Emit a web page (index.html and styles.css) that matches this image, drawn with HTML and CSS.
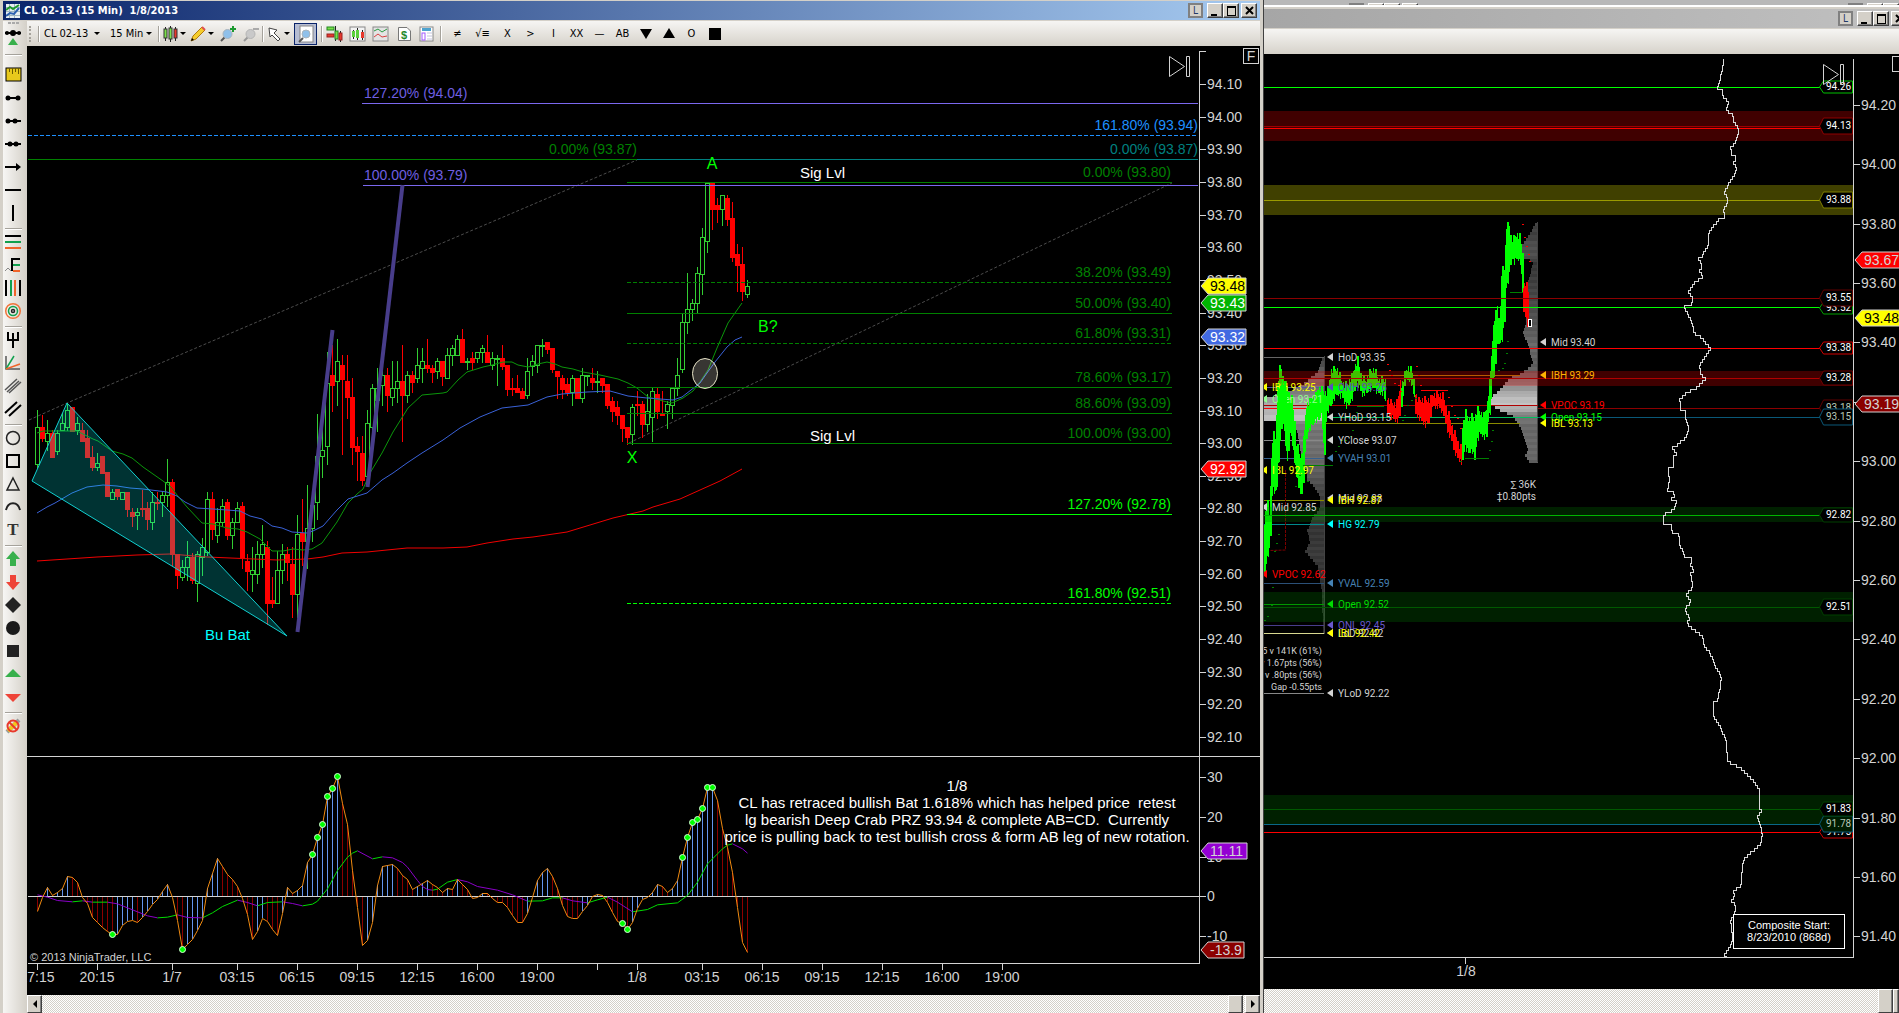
FILE: index.html
```html
<!DOCTYPE html>
<html lang="en">
<head>
<meta charset="utf-8">
<title>CL 02-13 (15 Min) 1/8/2013</title>
<link rel="stylesheet" href="styles.css">
</head>
<body>
<main class="desktop">
  <section class="window window-main">
    <header class="titlebar">
      <svg class="app-icon" viewBox="0 0 14 14"><rect width="14" height="14" fill="#e8eef2"/><path d="M0 3.500H14M0 7.500H14M0 11.500H14M3.500 0V14M8.500 0V14" stroke="#9fb4c0"/><path d="M0 6L4 3L7 5L13 1" stroke="#1f9a2e" stroke-width="2" fill="none"/><path d="M0 12L4 9L8 10L13 4" stroke="#2b5fb0" stroke-width="2" fill="none"/></svg>
      <h1 class="title">CL 02-13 (15 Min)&nbsp; 1/8/2013</h1>
      <div class="controls">
        <button class="ctl ctl-link" aria-label="Link">L</button>
        <button class="ctl" aria-label="Minimize"><svg viewBox="0 0 13 12"><path d="M2 9H8V11H2Z"/></svg></button>
        <button class="ctl" aria-label="Maximize"><svg viewBox="0 0 13 12"><path d="M2 1H11V11H2ZM3 3V10H10V3Z" fill-rule="evenodd"/></svg></button>
        <button class="ctl ctl-close" aria-label="Close"><svg viewBox="0 0 13 12"><path d="M3 2L10 9M10 2L3 9" stroke="#000" stroke-width="2"/></svg></button>
      </div>
    </header>
    <div class="window-body">
      <nav class="side-tools" aria-label="Drawing tools">
        <button class="tool tool-first" aria-label="Show tools"><svg viewBox="0 0 18 24"><path d="M4 1H7M8 1H11M12 1H15" stroke="#aaa" stroke-width="2"/><path d="M1 11H17" stroke="#000" stroke-width="2"/><circle cx="3" cy="11" r="2"/><circle cx="9" cy="11" r="3"/><circle cx="15" cy="11" r="2"/><path d="M4 23L9 16L14 23Z" fill="#38b04c"/></svg></button>
        <hr class="rule rule-wide">
        <button class="tool" aria-label="Ruler"><svg viewBox="0 0 18 18"><rect x="2" y="2" width="15" height="13" fill="#e8c91c" stroke="#000"/><path d="M5.500 2V6M8.500 2V8M11.500 2V6M14.500 2V8" stroke="#6b5a00"/></svg></button>
        <button class="tool" aria-label="Line"><svg viewBox="0 0 18 18"><path d="M3 9H15" stroke="#000" stroke-width="2"/><circle cx="4" cy="9" r="2.500"/><circle cx="14" cy="9" r="2.500"/></svg></button>
        <button class="tool" aria-label="Ray"><svg viewBox="0 0 18 18"><path d="M3 9H17" stroke="#000" stroke-width="2"/><circle cx="4" cy="9" r="2.500"/><circle cx="11" cy="9" r="2.500"/></svg></button>
        <button class="tool" aria-label="Extended line"><svg viewBox="0 0 18 18"><path d="M1 9H17" stroke="#000" stroke-width="2"/><circle cx="6" cy="9" r="2.500"/><circle cx="12" cy="9" r="2.500"/></svg></button>
        <button class="tool" aria-label="Arrow line"><svg viewBox="0 0 18 18"><path d="M1 9H15" stroke="#000" stroke-width="2"/><path d="M12 5L17 9L12 13Z"/></svg></button>
        <button class="tool" aria-label="Horizontal line"><svg viewBox="0 0 18 18"><path d="M1 9H17" stroke="#000" stroke-width="2"/></svg></button>
        <button class="tool" aria-label="Vertical line"><svg viewBox="0 0 18 18"><path d="M9 1V17" stroke="#000" stroke-width="2"/></svg></button>
        <hr class="rule">
        <button class="tool" aria-label="Fibonacci retracement"><svg viewBox="0 0 18 18"><path d="M1 3H17" stroke="#000" stroke-width="2"/><path d="M1 9H17" stroke="#12a04e" stroke-width="2"/><path d="M1 15H17" stroke="#f0642a" stroke-width="2"/></svg></button>
        <button class="tool" aria-label="Fibonacci extension"><svg viewBox="0 0 18 18"><path d="M16 3H8V15" stroke="#000" stroke-width="2" fill="none"/><path d="M9 9H16" stroke="#12a04e" stroke-width="2"/><path d="M9 15H16" stroke="#f0642a" stroke-width="2"/><path d="M1 15L4 12L7 15" stroke="#888" fill="none"/></svg></button>
        <button class="tool" aria-label="Fibonacci time"><svg viewBox="0 0 18 18"><path d="M2 1V17M16 1V17" stroke="#000" stroke-width="2"/><path d="M7 1V17" stroke="#12a04e" stroke-width="2"/><path d="M11 1V17" stroke="#f0642a" stroke-width="2"/></svg></button>
        <button class="tool" aria-label="Fibonacci circle"><svg viewBox="0 0 18 18" fill="none" stroke-width="1.500"><circle cx="9" cy="9" r="7.300" stroke="#f0743a"/><circle cx="9" cy="9" r="4.500" stroke="#12a04e"/><circle cx="9" cy="9" r="1.500" stroke="#222"/></svg></button>
        <hr class="rule">
        <button class="tool" aria-label="Andrews pitchfork"><svg viewBox="0 0 18 18"><path d="M4 1V9H14V1M9 2V17" stroke="#000" stroke-width="2" fill="none"/></svg></button>
        <button class="tool" aria-label="Gann fan"><svg viewBox="0 0 18 18"><path d="M2 2V15H16" stroke="#555" stroke-width="1.500" fill="none"/><path d="M2 15L10 2" stroke="#12a04e" stroke-width="1.500"/><path d="M2 15L16 10" stroke="#f0642a" stroke-width="1.500"/></svg></button>
        <button class="tool" aria-label="Regression channel"><svg viewBox="0 0 18 18"><path d="M1 13L13 2M3 15L15 4M5 16L17 5" stroke="#555" stroke-width="1.500"/></svg></button>
        <button class="tool" aria-label="Trend channel"><svg viewBox="0 0 18 18"><path d="M1 13L13 2M5 16L17 5" stroke="#000" stroke-width="2"/></svg></button>
        <hr class="rule">
        <button class="tool" aria-label="Ellipse"><svg viewBox="0 0 18 18"><circle cx="9" cy="9" r="6.500" fill="none" stroke="#222" stroke-width="1.500"/></svg></button>
        <button class="tool" aria-label="Rectangle"><svg viewBox="0 0 18 18"><rect x="3" y="3" width="12" height="12" fill="none" stroke="#000" stroke-width="2"/></svg></button>
        <button class="tool" aria-label="Triangle"><svg viewBox="0 0 18 18"><path d="M9 3L15 15H3Z" fill="none" stroke="#222" stroke-width="1.500"/></svg></button>
        <button class="tool" aria-label="Arc"><svg viewBox="0 0 18 18"><path d="M2 12C4 3 14 3 16 12" fill="none" stroke="#222" stroke-width="2"/></svg></button>
        <button class="tool tool-text" aria-label="Text">T</button>
        <hr class="rule">
        <button class="tool" aria-label="Arrow up"><svg viewBox="0 0 18 18"><path d="M9 1L16 9H12V16H6V9H2Z" fill="#38b04c"/></svg></button>
        <button class="tool" aria-label="Arrow down"><svg viewBox="0 0 18 18"><path d="M9 17L16 9H12V2H6V9H2Z" fill="#ee4438"/></svg></button>
        <button class="tool" aria-label="Diamond"><svg viewBox="0 0 18 18"><path d="M9 1L17 9L9 17L1 9Z" fill="#222"/></svg></button>
        <button class="tool" aria-label="Dot"><svg viewBox="0 0 18 18"><circle cx="9" cy="9" r="7" fill="#1a1a1a"/></svg></button>
        <button class="tool" aria-label="Square"><svg viewBox="0 0 18 18"><rect x="3" y="3" width="12" height="12" fill="#222"/></svg></button>
        <button class="tool" aria-label="Triangle up"><svg viewBox="0 0 18 18"><path d="M9 4L17 12H1Z" fill="#38b04c"/></svg></button>
        <button class="tool" aria-label="Triangle down"><svg viewBox="0 0 18 18"><path d="M9 14L17 6H1Z" fill="#ee4438"/></svg></button>
        <hr class="rule">
        <button class="tool" aria-label="Remove drawings"><svg viewBox="0 0 18 18"><path d="M3 15L15 3" stroke="#999" stroke-width="4"/><path d="M4 14L13 5" stroke="#f2c51d" stroke-width="4"/><circle cx="9" cy="9" r="5.500" fill="none" stroke="#e8392c" stroke-width="2"/><path d="M5 5L13 13" stroke="#e8392c" stroke-width="2"/></svg></button>
      </nav>
      <div class="chart-column">
        <div class="toolbar">
          <span class="grip"></span><span class="vr"></span>
          <label class="picker"><select class="pick pick-instrument" aria-label="Instrument"><option>CL 02-13</option></select></label>
          <label class="picker"><select class="pick pick-interval" aria-label="Interval"><option>15 Min</option></select></label>
          <span class="vr"></span>
          <button class="tb tb-drop" aria-label="Chart style"><svg viewBox="0 0 16 18"><path d="M3.500 2V16M8.500 1V17M13.500 2V16" stroke="#222"/><rect x="2" y="4" width="3" height="9" fill="#7be04a" stroke="#333"/><rect x="7" y="3" width="3" height="11" fill="#7be04a" stroke="#333"/><rect x="12" y="4" width="3" height="9" fill="#e8392c" stroke="#333"/></svg></button>
          <button class="tb tb-drop" aria-label="Draw"><svg viewBox="0 0 16 18"><path d="M1 16L3 11L12 2L15 5L6 14Z" fill="#f5cd2c" stroke="#b07a10"/><path d="M1 16L2 13L4 15Z"/><path d="M12 2L15 5" stroke="#e05050" stroke-width="2"/></svg></button>
          <button class="tb" aria-label="Zoom in"><svg viewBox="0 0 18 18"><path d="M2 16L6 12" stroke="#555" stroke-width="2"/><circle cx="8.500" cy="9" r="4.500" fill="#8fc0ea" stroke="#a9b4bd"/><path d="M14 1V7M11 4H17" stroke="#1c9a30" stroke-width="2"/></svg></button>
          <button class="tb" aria-label="Zoom out"><svg viewBox="0 0 18 18"><path d="M2 16L6 12" stroke="#999" stroke-width="2"/><circle cx="8.500" cy="9" r="4.500" fill="#c9c9c9" stroke="#b5b5b5"/><path d="M11 4H17" stroke="#aaa" stroke-width="2"/></svg></button>
          <span class="vr"></span>
          <button class="tb tb-drop" aria-label="Pointer"><svg viewBox="0 0 16 18"><path d="M3 3L11 5L8 8L14 14L12 16L6 10L4 12Z" fill="#fff" stroke="#444"/></svg></button>
          <button class="tb tb-active" aria-label="Magnifier"><svg viewBox="0 0 18 18"><rect x="3" y="1" width="13" height="16" fill="#fff" stroke="#888"/><path d="M2 17L6 13" stroke="#555" stroke-width="2"/><circle cx="9" cy="9" r="4" fill="#8fc0ea" stroke="#a9b4bd"/></svg></button>
          <span class="vr"></span>
          <button class="tb" aria-label="Data series"><svg viewBox="0 0 18 18"><path d="M9.500 1V16M14.500 6V17" stroke="#222"/><rect x="1" y="2" width="7" height="3" fill="#7be04a" stroke="#282"/><rect x="1" y="9" width="7" height="3" fill="#e8392c" stroke="#922"/><rect x="9" y="6" width="3" height="8" fill="#7be04a" stroke="#282"/><rect x="13" y="8" width="3" height="7" fill="#e8392c" stroke="#922"/></svg></button>
          <button class="tb" aria-label="Candles"><svg viewBox="0 0 18 18"><rect x="1" y="2" width="15" height="14" fill="#f4f4f4" stroke="#888"/><path d="M4.500 5V14M8.500 3V15M13.500 5V15" stroke="#222"/><rect x="3" y="6" width="3" height="6" fill="#5bd03a"/><rect x="7" y="5" width="3" height="8" fill="#5bd03a"/><rect x="12" y="7" width="3" height="6" fill="#e8392c"/></svg></button>
          <button class="tb" aria-label="Indicators"><svg viewBox="0 0 18 18"><rect x="1" y="2" width="15" height="14" fill="#e4e4e4" stroke="#888"/><path d="M2 6L6 4L10 7L15 4" stroke="#2a9a40" fill="none"/><path d="M2 12L6 9L10 12L15 11" stroke="#d94040" fill="none"/></svg></button>
          <button class="tb" aria-label="Strategies"><svg viewBox="0 0 18 18"><path d="M3.500 2.500H12L15.500 6V15.500H3.500Z" fill="#fff" stroke="#777"/><text class="dollar" x="9" y="14" text-anchor="middle">$</text></svg></button>
          <button class="tb" aria-label="Properties"><svg viewBox="0 0 18 18"><rect x="2" y="2" width="13" height="14" fill="#fff" stroke="#888"/><rect x="4" y="3" width="9" height="3" fill="#4ea3cf"/><rect x="4" y="8" width="3" height="7" fill="#fff" stroke="#a259ff"/><path d="M9 8H14M9 11H14M9 14H14" stroke="#c4c4dd"/></svg></button>
          <span class="vr vr-spaced"></span>
          <button class="tx">≠</button><button class="tx tx-wide">√≡</button><button class="tx">X</button><button class="tx">&gt;</button><button class="tx">I</button><button class="tx">XX</button><button class="tx">—</button><button class="tx">AB</button><button class="tx" aria-label="Marker down"><svg viewBox="0 0 12 12"><path d="M0 1H12L6 11Z"/></svg></button><button class="tx" aria-label="Marker up"><svg viewBox="0 0 12 12"><path d="M0 10H12L6 0Z"/></svg></button><button class="tx">O</button><button class="tx" aria-label="Marker square"><svg viewBox="0 0 12 12"><path d="M0 0H12V12H0Z"/></svg></button>
        </div>
        <svg class="chart" id="price-chart" viewBox="27 46 1233 949" preserveAspectRatio="xMinYMin slice" role="img" aria-label="Crude oil 15 minute chart"></svg>
        <div class="scrollbar"><button class="sb" aria-label="Scroll left"><svg viewBox="0 0 12 12"><path d="M8 2V10L4 6Z"/></svg></button><span class="track"></span><button class="sb" aria-label="Scroll thumb"></button><button class="sb sb-end" aria-label="Scroll right"><svg viewBox="0 0 12 12"><path d="M4 2V10L8 6Z"/></svg></button></div>
      </div>
    </div>
  </section>
  <section class="window window-profile">
    <div class="behind">
      <div class="controls"><span class="ctl ctl-link"></span><span class="ctl"></span><span class="ctl"></span><span class="ctl ctl-close"></span></div>
      <div class="controls"><span class="ctl ctl-link"></span><span class="ctl"></span><span class="ctl"></span></div>
    </div>
    <header class="titlebar titlebar-idle">
      <div class="controls">
        <button class="ctl ctl-link" aria-label="Link">L</button>
        <button class="ctl" aria-label="Minimize"><svg viewBox="0 0 13 12"><path d="M2 9H8V11H2Z"/></svg></button>
        <button class="ctl" aria-label="Maximize"><svg viewBox="0 0 13 12"><path d="M2 1H11V11H2ZM3 3V10H10V3Z" fill-rule="evenodd"/></svg></button>
        <button class="ctl ctl-close" aria-label="Close"><svg viewBox="0 0 13 12"><path d="M3 2L10 9M10 2L3 9" stroke="#000" stroke-width="2"/></svg></button>
      </div>
    </header>
    <div class="toolbar"></div>
    <svg class="chart" id="profile-chart" viewBox="1264 54 635 935" preserveAspectRatio="xMinYMin slice" role="img" aria-label="Volume profile chart"></svg>
    <div class="scrollbar scrollbar-tall"><span class="track"></span><button class="sb" aria-label="Scroll thumb"></button><span class="sb sb-cut"></span></div>
  </section>
</main>
<script src="chart.js"></script>
</body>
</html>
```
FILE: styles.css
```css
* { box-sizing: border-box; }
body { margin: 0; background: #000; font: 11px "DejaVu Sans Condensed", "DejaVu Sans", sans-serif; color: #000; }
button { margin: 0; padding: 0; border: 0; background: none; color: inherit; font: inherit; }
svg { display: block; }
.desktop { display: grid; grid-template-columns: 1264fr 635fr; height: 100vh; min-height: 640px; overflow: hidden; }
.window { display: flex; flex-direction: column; min-width: 0; min-height: 0; background: #d4d0c8; overflow: hidden; }
.window-main { padding: 1px 3px 0; border-right: 1px solid #404040; }
.titlebar { display: flex; align-items: center; gap: 4px; flex: none; height: 19px; padding: 0 3px; background: linear-gradient(90deg, #0a246a, #a6caf0); }
.titlebar-idle { height: 19px; padding: 0; justify-content: flex-end; background: linear-gradient(90deg, #a6a6a6, #c0c0c0); }
.app-icon { width: 14px; height: 14px; }
.title { margin: 0; flex: 1; font-size: 11px; font-weight: bold; line-height: 19px; color: #fff; white-space: nowrap; }
.controls { display: flex; align-items: center; }
.titlebar-idle .controls { margin-right: -8px; }
.ctl { display: grid; place-items: center; width: 16px; height: 15px; flex: none; background: #d4d0c8; border: 1px solid; border-color: #fff #404040 #404040 #fff; box-shadow: inset -1px -1px 0 #808080; }
.ctl svg { width: 13px; height: 12px; }
.ctl-link { width: 15px; margin-right: 4px; border: 2px solid #808080; box-shadow: none; color: #223a66; font-size: 10px; line-height: 10px; }
.ctl-close { margin-left: 2px; }
.window-body { display: flex; flex: 1; min-height: 0; margin-top: 1px; }
.side-tools { display: flex; flex-direction: column; flex: none; width: 24px; padding-right: 4px; align-items: center; background: linear-gradient(90deg, #f7f6f4, #d4d0c8); }
.tool { display: grid; place-items: center; flex: none; width: 18px; height: 23px; }
.tool svg { width: 18px; height: 18px; }
.tool-first { height: 25px; }
.tool-first svg { height: 24px; }
.tool-text { font: bold 17px "Liberation Serif", serif; color: #333; }
.rule { flex: none; width: 17px; height: 2px; margin: 4px 0 0; border: 0; background: #a5a29b; border-bottom: 1px solid #fff; }
.rule-wide { margin: 8px 0 7px; }
.chart-column { display: flex; flex-direction: column; flex: 1; min-width: 0; }
.toolbar { display: flex; align-items: center; flex: none; height: 25px; background: linear-gradient(#f6f5f3, #d6d2ca); white-space: nowrap; overflow: hidden; }
.window-profile .toolbar { margin-top: 1px; }
.grip { width: 3px; height: 16px; margin: 0 6px 0 2px; border-left: 2px dotted #a5a29b; }
.vr { flex: none; width: 2px; height: 16px; background: #a5a29b; border-right: 1px solid #fff; }
.vr-spaced { margin: 0 4px 0 2px; }
.picker { display: flex; align-items: center; padding: 0 10px 0 4px; }
.picker::after, .tb-drop::after { content: ""; border: 3px solid transparent; border-top-color: #000; border-bottom: 0; }
.pick { appearance: none; border: 0; padding: 0; background: none; font: 11px "DejaVu Sans Condensed", "DejaVu Sans", sans-serif; color: #000; }
.pick-instrument { width: 50px; }
.pick-interval { width: 36px; }
.picker + .picker { padding: 0 6px 0 0; }
.tb { display: flex; align-items: center; justify-content: center; gap: 2px; flex: none; width: 23px; height: 22px; }
.tb svg { width: 18px; height: 18px; }
.tb-drop { width: 28px; }
.tb-drop svg { width: 16px; }
.tb-active { margin: 0 4px 0 2px; border: 1px solid #0a246a; background: #b6bdd2; }
.dollar { font: bold 11px "Liberation Sans", Arial, sans-serif; fill: #1f8a2a; }
.tx { display: grid; place-items: center; flex: none; width: 23px; height: 22px; }
.tx-wide { width: 27px; }
.tx svg { width: 12px; height: 12px; }
.chart { flex: 1; width: 100%; min-height: 0; background: #000; font-family: "Liberation Sans", Arial, sans-serif; }
.chart text { white-space: pre; }
.scrollbar { display: flex; flex: none; height: 18px; background: repeating-conic-gradient(#fff 0 25%, #d4d0c8 0 50%) 0 0 / 2px 2px; }
.scrollbar-tall { height: 24px; }
.track { flex: 1; }
.sb { display: grid; place-items: center; flex: none; width: 15px; height: 100%; background: #d4d0c8; border: 1px solid; border-color: #fff #404040 #404040 #fff; box-shadow: inset -1px 0 0 #808080; }
.sb svg { width: 12px; height: 12px; }
.sb-end { margin-left: 2px; }
.sb-cut { width: 6px; }
.behind { display: flex; justify-content: space-between; align-items: flex-start; flex: none; height: 9px; padding: 3px 0 0 85px; background: linear-gradient(#b8b8b8 5px, #fff 5px, #fff 7px, #d4d0c8 7px); overflow: hidden; }
.behind .controls { height: 2px; overflow: hidden; align-items: flex-start; }
.behind .ctl { height: 12px; }

.price { font-size: 14px; fill: #d3d3d3; }
.note { font-size: 15px; fill: #fff; }
.mark { font-size: 16px; fill: #0f0; }
.fine { font-size: 11px; fill: #d3d3d3; }
.tag { font-size: 11px; fill: #fff; }
.level { font: 10px Roboto, sans-serif; }
.stat { font: 9px Roboto, sans-serif; fill: #d3d3d3; }
.crisp { shape-rendering: crispEdges; }
```
FILE: chart.js
```js
const NS = 'http://www.w3.org/2000/svg';
let host;
function el(name, attrs, text) {
  const n = document.createElementNS(NS, name);
  for (const k in attrs) n.setAttribute(k, attrs[k]);
  if (text !== undefined) n.textContent = text;
  host.appendChild(n);
  return n;
}
const line = (x1, y1, x2, y2, c, dash, w) =>
  el('line', { x1, y1, x2, y2, stroke: c, 'stroke-width': w || 1, class: 'crisp', ...(dash ? { 'stroke-dasharray': dash } : {}) });
const rect = (x, y, width, height, fill, more) => el('rect', { x, y, width, height, fill, class: 'crisp', ...more });
const text = (x, y, s, cls, fill, anchor) =>
  el('text', { x, y, class: cls, ...(fill ? { style: 'fill:' + fill } : {}), 'text-anchor': anchor || 'start' }, s);
const poly = (pts, c, w) => el('polyline', { points: pts, fill: 'none', stroke: c, 'stroke-width': w || 1 });
function tagLeft(x, y, w, s, fill, ink) {
  el('polygon', { points: `${x},${y} ${x + 7},${y - 8} ${x + w},${y - 8} ${x + w},${y + 8} ${x + 7},${y + 8}`, fill, stroke: '#d3d3d3' });
  text(x + 9, y + 5, s, 'price', ink);
}
function skipIcon(x, y) {
  el('path', { d: `M${x} ${y}V${y + 20}L${x + 15} ${y + 10}ZM${x + 17} ${y}H${x + 20}V${y + 20}H${x + 17}Z`, fill: 'none', stroke: '#d3d3d3' });
}
const lerp = (pts, t) => {
  for (let i = 1; i < pts.length; i++) if (t <= pts[i][0]) {
    const a = pts[i - 1], b = pts[i], f = (t - a[0]) / (b[0] - a[0] || 1);
    return a.slice(1).map((v, k) => v + (b[k + 1] - v) * f);
  }
  return pts[pts.length - 1].slice(1);
};
const pairs = s => s.trim().split(/\s+/).map(p => p.split(',').map(Number));

/* ---------- price chart ---------- */
host = document.getElementById('price-chart');

/* one bar per entry: direction, high, body top, body bottom, low */
const bars = `G410,427,464,467 R415,427,438,441 G420,433,441,450 R430,433,457,457 G430,433,451,454 G413,423,430,430 G403,410,427,430 R407,407,431,431 G417,423,430,434 R423,430,441,441 R430,438,457,457 R446,457,467,470 G453,463,467,470 R456,456,473,473 R472,472,496,496 G489,492,499,499 R489,489,496,499 G492,492,499,499 R492,492,509,516 R508,512,516,526 G508,512,515,529 R490,508,509,516 R502,508,519,529 G492,502,522,529 R492,502,503,509 G492,495,502,516 G459,482,495,506 R479,482,554,565 R554,554,575,588 G560,567,577,580 G541,557,567,580 R553,557,580,583 G551,554,583,601 G538,547,557,575 G492,499,552,555 R492,499,529,539 G508,522,535,542 G499,506,522,526 R499,502,535,539 G518,522,535,548 G502,508,522,522 R502,506,558,568 R554,561,571,590 G547,570,574,591 G541,554,574,583 G525,544,554,567 R541,547,603,624 R577,600,603,607 G551,570,603,603 G544,554,570,583 R547,554,562,580 R547,564,594,617 G515,534,594,617 R499,533,541,565 G485,528,541,568 G502,505,528,541 G414,456,502,519 G423,450,456,477 G352,383,446,464 R345,375,385,411 G339,361,381,405 R355,365,379,454 R355,381,397,418 R378,397,447,464 R437,446,451,480 R436,453,480,485 G410,423,476,476 G384,388,427,450 G368,388,400,431 G365,375,385,405 R368,375,395,411 G361,388,397,405 G361,381,388,402 R345,381,395,441 G371,375,395,402 R371,375,382,392 G348,365,378,382 G348,361,368,382 R339,365,368,372 R365,368,372,382 G358,361,371,378 R361,361,376,385 G348,355,378,378 G345,348,355,365 G335,339,355,355 R329,339,362,362 G358,361,362,369 R352,358,362,369 G352,352,358,362 G345,348,352,362 R335,352,362,362 G352,358,365,369 G355,358,359,385 R345,358,366,369 R365,365,389,395 R378,388,389,395 R375,388,392,392 R388,391,398,398 G358,371,395,398 G355,361,366,375 G345,345,365,372 G339,345,346,356 R342,342,349,353 R348,348,369,372 R371,371,376,398 R375,378,389,398 R378,384,392,395 G375,378,392,405 R378,378,398,398 G368,375,398,402 G375,375,376,385 R368,378,382,389 G371,381,382,392 R378,378,385,392 R384,384,405,408 R397,401,411,421 R401,407,415,424 R415,415,428,441 R427,427,437,444 G404,407,434,444 R391,404,405,415 R401,404,424,437 G394,411,424,431 G388,391,417,441 R388,394,411,418 R391,414,415,415 G401,404,411,428 G388,388,405,418 G358,375,388,395 G313,322,369,372 G273,309,322,333 G299,303,309,320 G267,273,303,313 G228,237,274,294 G183,183,241,252 R183,183,209,229 R198,205,209,222 G195,195,209,225 R195,198,219,225 R202,218,257,261 R244,254,265,291 R247,264,291,300 G280,286,294,297`.split(' ');

poly('29,420 67,403 637,160', '#4c4c4c').setAttribute('stroke-dasharray', '3 2');
poly('629,443 1172,183', '#4c4c4c').setAttribute('stroke-dasharray', '3 2');

bars.forEach((b, i) => {
  const up = b[0] === 'G', [h, t, o, l] = b.slice(1).split(',').map(Number), x = 37 + 5 * i;
  const c = up ? '#32cd32' : '#ff0000';
  if (h < t) rect(x, h, 1, t - h, c);
  if (l > o) rect(x, o, 1, l - o + 1, c);
  if (up && o - t > 1) el('rect', { x: x - 1.5, y: t + .5, width: 4, height: o - t, fill: '#000', stroke: c, class: 'crisp' });
  else rect(x - 2, t, 5, o - t + 1, c);
});

poly('37,433 43,431 77,431 87,436 93,439 98,441 112,451 123,454 132,458 143,467 153,474 163,481 171,487 177,495 187,507 202,523 213,524 227,528 238,529 247,532 260,539 272,551 283,551 293,549 303,550 312,549 322,543 337,522 348,503 357,494 363,489 370,473 382,453 393,432 408,408 422,395 443,393 447,392 458,380 467,372 483,367 492,365 503,362 512,362 518,365 528,367 538,364 547,362 555,364 562,367 573,369 583,372 600,375 618,379 628,383 637,388 648,397 663,401 672,403 683,398 693,391 700,382 708,370 717,348 728,323 742,303', '#0b960b');
poly('37,513 47,507 55,503 72,493 87,487 103,485 117,486 130,488 143,489 167,492 177,496 185,502 197,508 213,509 227,510 240,511 250,516 262,519 272,526 282,528 292,532 307,533 313,531 323,526 337,510 348,499 367,493 382,480 393,473 407,463 422,453 443,440 460,428 480,417 502,408 528,405 547,397 562,394 587,392 610,391 628,396 647,398 673,400 682,397 700,383 707,373 715,362 727,347 735,340 742,337', '#3a62d8');
poly('37,561 67,559 97,557 137,555 170,554 207,557 277,560 307,559 323,557 342,553 367,552 407,548 443,548 467,547 487,543 513,539 533,537 567,532 590,525 613,518 643,511 653,507 680,499 700,490 720,481 742,469', '#f00000');
el('polygon', { points: '32,481 67,403 287,636', fill: '#00ffff', 'fill-opacity': .2, stroke: '#12cfd0' });

/* fibonacci levels */
line(362, 103.5, 1198, 103.5, '#7b68ee');
line(363, 185.5, 1198, 185.5, '#7b68ee');
line(28, 135.5, 1198, 135.5, '#1e90ff', '4 2');
line(28, 159.5, 637, 159.5, '#008000');
line(637, 159.5, 1198, 159.5, '#008080');
text(364, 98, '127.20% (94.04)', 'price', '#6f5fe0');
text(364, 180, '100.00% (93.79)', 'price', '#6f5fe0');
text(1198, 130, '161.80% (93.94)', 'price', '#1e90ff', 'end');
text(1198, 154, '0.00% (93.87)', 'price', '#008080', 'end');
text(637, 154, '0.00% (93.87)', 'price', '#008000', 'end');
[[182.5, '0.00% (93.80)'], [282.5, '38.20% (93.49)', 1], [313.5, '50.00% (93.40)'], [343.5, '61.80% (93.31)', 1],
 [387.5, '78.60% (93.17)'], [413.5, '88.60% (93.09)'], [443.5, '100.00% (93.00)'],
 [514.5, '127.20% (92.78)', 0, '#00ff00'], [603.5, '161.80% (92.51)', 1, '#00ff00']].forEach(([y, s, dash, c]) => {
  line(627, y, 1172, y, c || '#008000', dash ? '4 2' : '');
  text(1171, y - 5.5, s, 'price', c || '#008000', 'end');
});
el('ellipse', { cx: 705, cy: 373.5, rx: 12.5, ry: 15, fill: '#fff8e8', 'fill-opacity': .22, stroke: '#e8e4c8' });
poly('297.5,632 332.500,330', '#483d8b', 4);
poly('367.5,487 402.500,185', '#483d8b', 4);
text(712, 169, 'A', 'mark', '', 'middle');
text(632, 463, 'X', 'mark', '', 'middle');
text(758, 332, 'B?', 'mark');
text(800, 178, 'Sig Lvl', 'note');
text(810, 441, 'Sig Lvl', 'note');
text(205, 640, 'Bu Bat', 'note', '#00ffff');

/* oscillator panel */
const osc = [512,470,440,464,455,443,407,412,425,470,488,530,547,562,573,583,581,556,544,541,545,530,512,492,477,452,431,470,540,628,613,597,570,541,443,400,353,378,402,416,438,475,523,596,572,533,543,567,585,520,442,458,450,434,365,343,292,253,169,145,109,190,253,390,500,616,601,547,434,377,374,371,384,404,417,448,437,430,421,431,442,455,443,446,416,432,448,475,470,460,460,475,485,485,500,525,547,547,520,470,421,395,383,408,445,495,527,535,535,512,495,467,463,466,485,515,543,550,568,545,505,478,470,455,433,437,457,443,420,350,290,247,238,205,142,140,180,265,320,395,500,605,635];
const oy = v => Math.round(740 + v / 3);
osc.forEach((v, i) => {
  const y = oy(v), z = 896, x = 37 + 5 * i;
  rect(x, Math.min(y, z), 1, Math.abs(z - y) || 1, i && v < osc[i - 1] ? '#6495ed' : '#8b0000');
});
line(28, 896.5, 1199, 896.5, '#d3d3d3');
const sm = pairs('0,463 2,470 4,480 7,484 9,481 11,485 14,485 16,490 20,514 22,526 24,532 26,530 28,523 30,531 33,532 35,517 37,498 40,479 42,486 44,496 46,486 49,484 51,489 53,496 55,491 56,482 58,445 60,390 62,350 63,338 64,331 67,355 69,349 71,352 73,366 74,380 76,420 77,438 78,447 79,449 80,446 82,425 84,417 86,424 88,438 92,449 95,463 98,482 101,481 103,472 105,472 107,481 110,487 112,478 114,470 116,485 119,514 122,507 124,493 128,487 130,465 132,425 134,370 136,340 137,325 138,314 139,310 141,325 142,338');
for (let i = 1; i < sm.length; i++) {
  const [a, b] = [sm[i - 1], sm[i]];
  poly(`${37.5 + 5 * a[0]},${740.5 + a[1] / 3} ${37.5 + 5 * b[0]},${740.5 + b[1] / 3}`, b[1] <= a[1] ? '#00dc00' : '#8a00c8');
}
poly(osc.map((v, i) => `${37.5 + 5 * i},${oy(v) + .5}`).join(' '), '#f08a10');
[15, 29, 55, 56, 57, 58, 59, 60, 117, 118, 129, 130, 131, 132, 133, 134, 135].forEach(i =>
  el('circle', { cx: 37.5 + 5 * i, cy: oy(osc[i]) + .5, r: 3, fill: '#00ff00', stroke: '#d8ffd8' }));
[[791, '1/8'], [808, 'CL has retraced bullish Bat 1.618% which has helped price  retest'],
 [825, 'lg bearish Deep Crab PRZ 93.94 & complete AB=CD.  Currently'],
 [842, 'price is pulling back to test bullish cross & form AB leg of new rotation.']].forEach(([y, s]) =>
  text(957, y, s, 'note', '', 'middle'));
text(30, 961, '© 2013 NinjaTrader, LLC', 'fine');

/* axes */
rect(1200, 46, 60, 949, '#000');
line(1199.5, 51, 1199.5, 964, '#d3d3d3');
line(1199, 51.5, 1206, 51.5, '#d3d3d3');
line(27, 756.5, 1260, 756.5, '#d3d3d3');
line(28, 963.5, 1200, 963.5, '#d3d3d3');
for (let i = 0; i <= 20; i++) {
  const y = Math.round(84 + i * 32.65);
  line(1199, y + .5, 1206, y + .5, '#d3d3d3');
  text(1207, y + 5, (94.1 - i * .1).toFixed(2), 'price');
}
[[777, '30'], [817, '20'], [857, '10'], [896, '0'], [936, '-10']].forEach(([y, s]) => {
  line(1199, y + .5, 1206, y + .5, '#d3d3d3');
  text(1207, y + 5, s, 'price');
});
[[37, '17:15'], [97, '20:15'], [172, '1/7'], [237, '03:15'], [297, '06:15'], [357, '09:15'], [417, '12:15'], [477, '16:00'], [537, '19:00'],
 [597, ''], [637, '1/8'], [702, '03:15'], [762, '06:15'], [822, '09:15'], [882, '12:15'], [942, '16:00'], [1002, '19:00']].forEach(([x, s]) => {
  line(x + .5, 963, x + .5, 970, '#d3d3d3');
  text(x, 982, s, 'price', '', 'middle');
});
tagLeft(1201, 286, 45, '93.48', '#ffff00', '#000');
tagLeft(1201, 303, 45, '93.43', '#00b400', '#fff');
tagLeft(1201, 337, 45, '93.32', '#4169e1', '#fff');
tagLeft(1201, 469, 45, '92.92', '#ff0000', '#fff');
tagLeft(1201, 851, 46, '11.11', '#9400d3', '#d3d3d3');
tagLeft(1201, 950, 43, '-13.9', '#8b0000', '#d3d3d3');
skipIcon(1169.5, 56.5);
rect(1243.5, 48.5, 15, 15, '#000', { stroke: '#d3d3d3' });
text(1251, 61, 'F', 'price', '', 'middle');

/* ---------- profile chart ---------- */
host = document.getElementById('profile-chart');
const R = 1853;

/* volume histograms, right-anchored: y, left edge, grey */
function histogram(rows, right) {
  for (let y = rows[0][0]; y < rows[rows.length - 1][0]; y += 3) {
    const [x, g] = lerp(rows, y), k = Math.round(g + (y % 2 ? 8 : 0));
    rect(Math.round(x), y, right - Math.round(x), 3, `rgb(${k},${k},${k})`);
  }
}
histogram(pairs('358,1322,60 370,1318,90 380,1307,110 390,1290,110 397,1264,150 418,1264,190 419,1282,130 430,1297,110 442,1299,110 460,1303,100 470,1307,90 478,1307,80 485,1314,70 495,1320,60 507,1320,50 517,1312,50 530,1307,50 540,1310,50 550,1305,55 565,1318,50 590,1322,45 634,1323,45'), 1324);
histogram(pairs('223,1535,60 235,1528,60 243,1522,75 256,1521,75 260,1533,50 282,1528,60 320,1526,80 332,1523,90 343,1528,100 362,1533,90 372,1522,95 377,1510,110 382,1505,130 388,1500,150 395,1492,180 402,1489,190 408,1498,170 414,1512,120 425,1520,100 437,1524,100 447,1528,100 455,1525,100 462,1531,90'), 1538);
line(1324.5, 356, 1324.5, 634, '#444');
line(1537.5, 222, 1537.5, 462, '#444');

/* zones and levels */
const zones = [[111, 141, '#ff0000', .25], [185, 215, '#ffff00', .25], [371, 386, '#ff0000', .25], [507, 522, '#008000', .25], [592, 622, '#008000', .25], [795, 824, '#008000', .25]];
[[1264, 1324, 357, '#666'], [1264, 1324, 387, '#5a50a0'], [1264, 1324, 440, '#888'], [1264, 1324, 458, '#36608c'], [1264, 1324, 500, '#8a8a00'], [1264, 1324, 524, '#008b8b'],
 [1264, 1324, 583, '#2b5078'], [1264, 1324, 604, '#00a000'], [1264, 1324, 625, '#483d8b'], [1264, 1324, 633, '#d8d890'], [1264, 1324, 693, '#888'],
 [1324, 1520, 375, '#a07800'], [1324, 1520, 423, '#8a8a00'], [1324, 1540, 417, '#00c060'], [1264, 1538, 405, '#b00000'], [1264, 1322, 408, '#ff0000']].forEach(([a, b, y, c]) => line(a, y + .5, b, y + .5, c));

/* session range as vertical strokes: x, high, low in thirds of a pixel from (1250, 330) */
function strokes(s, c) {
  const p = pairs(s);
  for (let x = p[0][0], i = 0; x <= p[p.length - 1][0]; x += 3, i++) {
    const [h, l] = lerp(p, x), j = [0, 22, -8, 34, 6, 15][i % 6], m = [8, -10, 26, 0, 18, -14][(i * 5) % 6];
    const top = 330 + (h - j / 2 + 4) / 3, bot = 330 + (l + m / 2 - 4) / 3;
    rect(Math.round(1250 + x / 3), Math.round(top), i % 3 ? 1 : 2, Math.max(2, Math.round(bot - top)), c);
  }
}
strokes('43,580,735 50,512,690 58,560,660 62,430,600 68,310,470 76,330,490 82,170,450 90,100,300 98,140,260 104,165,280 112,170,400 120,200,300 126,210,330 133,270,400 140,350,440 150,380,490 155,380,500 163,300,440 168,230,330 175,220,300 185,205,290 195,200,270 205,175,270 215,180,250 222,190,390 226,190,330 230,190,250 245,120,220 262,120,190 275,160,200 290,170,230 305,140,210 322,90,155 335,140,195 345,160,190 358,130,180 372,120,170 385,150,190 400,150,190 408,155,235', '#00ff00');
strokes('410,205,250 420,220,260 435,225,270 443,200,270 450,150,240', '#ff0000');
strokes('454,170,230 465,130,160 475,115,145 485,125,160 493,150,210', '#00ff00');
strokes('496,190,250 505,215,260 520,210,280 528,215,285 540,210,270 550,195,230 565,195,230 580,200,250 590,240,300 600,270,320 612,310,360 622,330,385 634,365,395', '#ff0000');
strokes('636,290,390 645,250,350 655,270,370 665,260,360 672,270,390 680,240,330 690,250,310 700,260,320 710,230,320 715,180,260 722,100,240 727,10,120 732,-35,135 741,-70,50 747,-10,35 755,-195,35 762,-185,-25 768,-310,-130 776,-315,-155 783,-270,-225 792,-275,-205 801,-285,-215 810,-275,-205 816,-235,-115', '#00ff00');
strokes('819,-130,-55 825,-140,-45 834,-110,-5', '#ff0000');
rect(1528, 319, 3, 7, '#000', { stroke: '#fff' });

/* trailing stops */
const dots = (s, c) => pairs(s).forEach(([x, y]) => rect(x, y, 2, 1, c));
poly('1303,465.5 1313,465.500 1333,465.500', '#008000');
dots('1295,486 1299,475 1307,481 1335,451 1338,446 1341,440 1345,440 1350,436 1352,430 1354,420 1356,412 1278,534 1276,543 1274,551 1272,587 1271,605 1267,616 1264,620', '#008000');
poly('1357,406.5 1384,406.5', '#008000');
dots('1402,420 1404,415 1407,405 1411,400 1415,398', '#008000');
dots('1387,364 1389,370 1391,375 1394,383 1398,385 1400,391 1398,396 1416,366 1418,375 1420,385 1448,397 1451,406 1454,415 1457,418 1460,428 1522,224 1524,237 1526,246 1528,254 1529,261', '#ff0000');
poly('1421,390.5 1448,390.5', '#ff0000');
poly('1465,458.5 1489,458.5', '#008000');
dots('1460,461 1489,450 1491,441 1492,430 1498,370 1502,368 1504,363 1506,353 1507,341', '#008000');
poly('1510,292.5 1523,292.5', '#008000');
poly('1285.5,470 1285.500,550 1270,550.5', '#7a0000').setAttribute('stroke-dasharray', '3 1');

zones.forEach(([a, b, c, o]) => rect(1264, a, R - 1264, b - a, c, { 'fill-opacity': o }));

/* level lines with price flags */
[[87, '#00ff00'], [126, '#a00000'], [128, '#ff0000'], [200, '#9b9b00'], [298, '#8b0000'], [307, '#00ff00'], [348, '#ff0000'], [378, '#b00000'], [408, '#8b0000'], [417, '#0a5878'],
 [515, '#00b400'], [607, '#005800'], [809, '#005800'], [824, '#0a6888'], [832, '#ff0000']].forEach(([y, c]) =>
  line(y === 408 || y === 417 ? 1538 : 1264, y + .5, 1821, y + .5, c));

/* composite profile outline */
const comp = pairs('430,178 422,222 412,262 425,270 430,292 446,303 437,327 455,340 460,362 476,385 465,425 450,440 455,465 470,470 460,485 467,505 460,525 445,545 440,565 428,570 440,590 443,602 428,628 433,647 415,655 385,695 383,735 365,765 353,770 365,795 357,810 367,830 348,840 322,872 337,892 330,915 312,918 325,945 335,965 342,997 365,1010 390,1045 370,1075 357,1095 362,1120 375,1133 350,1160 320,1175 298,1195 300,1225 315,1232 317,1260 325,1285 315,1310 288,1335 273,1338 288,1360 278,1370 278,1398 262,1405 267,1440 262,1467 288,1480 273,1495').map(([x, y]) => [y / 3, 1580 + x / 3])
  .concat(pairs('287,62 280,85 248,100 250,125 273,130 275,150 297,160 297,185 312,220 333,230 330,250 345,262 330,270 338,312 317,335 333,355 313,375 327,405 318,420 350,445 367,460 372,490 388,505 405,545 422,575 420,610 410,645 397,655 400,695 420,725 437,765 442,825 480,845 520,885 537,910 537,960 543,970 530,990 540,1010 545,1040 540,1070 515,1090 492,1110 485,1140 482,1190 457,1210 465,1215 450,1240 465,1245 463,1275 450,1295 457,1340 450,1370 433,1395 440,1404').map(([x, y]) => [480 + y / 2.942, 1580 + x / 3]));
let d = '';
for (let y = 59; y < 957; y += 3) {
  const x = Math.round(lerp(comp, y + 1)[0]) + .5;
  d += (d ? 'H' : 'M') + x + (d ? '' : ' ' + y) + 'V' + Math.min(957, y + 3);
}
el('path', { d, fill: 'none', stroke: '#d8d8d8', class: 'crisp' });

[[87, '94.26', '#00c000', 6], [126, '94.13', '#900000', 8], [200, '93.88', '#808000', 8], [308, '93.52', '#00a000', 6], [298, '93.55', '#600000', 8], [348, '93.38', '#d00000', 6],
 [378, '93.28', '#700000', 7], [408, '93.18', '#600000', 8], [417, '93.15', '#0a5878', 8], [515, '92.82', '#004000', 7], [607, '92.51', '#004000', 8],
 [832, '91.75', '#d00000', 6], [824, '91.78', '#0a5878', 8], [809, '91.83', '#004000', 7]].forEach(([y, s, c, h]) => {
  el('polygon', { points: `1819.5,${y} 1823.5,${y - h} 1852.5,${y - h} 1852.5,${y + h} 1823.5,${y + h}`, fill: y === 824 ? '#001c00' : '#000', stroke: c });
  text(1826, y + 3, s, 'level', y === 417 || y === 824 || y === 408 ? '#b8c8b8' : '#fff');
});

/* level names */
const names = (x, rows) => rows.forEach(([y, s, c]) => {
  el('polygon', { points: `${x},${y} ${x + 6},${y - 4} ${x + 6},${y + 4}`, fill: c });
  text(x + 11, y + 4, s, 'level', c);
});
names(1327, [[357, 'HoD 93.35', '#d3d3d3'], [387, 'ONH 93.26', '#5a50b8'], [417, 'YHoD 93.15', '#d3d3d3'], [440, 'YClose 93.07', '#d3d3d3'], [458, 'YVAH 93.01', '#4682b4'],
  [498, 'Mid 92.88', '#d3d3d3'], [500, 'IBH 92.87', '#ffff00'], [524, 'HG 92.79', '#00ffff'], [583, 'YVAL 92.59', '#4682b4'], [604, 'Open 92.52', '#00dc00'],
  [625, 'ONL 92.45', '#6a5acd'], [633, 'LoD 92.42', '#d3d3d3'], [633, 'IBL 92.42', '#ffff00'], [693, 'YLoD 92.22', '#d3d3d3']]);
names(1540, [[342, 'Mid 93.40', '#d3d3d3'], [375, 'IBH 93.29', '#ffb400'], [405, 'VPOC 93.19', '#ff0000'], [417, 'Open 93.15', '#00ff00'], [423, 'IBL 93.13', '#ffff00']]);
names(1261, [[387, 'IBH 93.25', '#ffff00'], [399, 'Open 93.21', '#90ff90'], [470, 'IBL 92.97', '#ffff00'], [507, 'Mid 92.85', '#d3d3d3'], [574, 'VPOC 92.62', '#ff0000']]);
strokes('76,340,480 85,190,400 98,150,255 110,190,380', '#00ff00');
[[654, '5 v 141K (61%)'], [666, 'v 1.67pts (56%)'], [678, 'v .80pts (56%)'], [690, 'Gap -0.55pts']].forEach(([y, s]) => text(1322, y, s, 'stat', '', 'end'));
text(1536, 488, '∑ 36K', 'level', '#d3d3d3', 'end');
text(1536, 500, '‡0.80pts', 'level', '#d3d3d3', 'end');

/* axes */
line(1853.5, 59, 1853.5, 957, '#d3d3d3');
line(1264, 957.5, 1854, 957.5, '#d3d3d3');
[[105, '94.20'], [164, '94.00'], [224, '93.80'], [283, '93.60'], [342, '93.40'], [402, ''], [461, '93.00'], [521, '92.80'], [580, '92.60'], [639, '92.40'], [699, '92.20'], [758, '92.00'], [818, '91.80'], [877, '91.60'], [936, '91.40']].forEach(([y, s]) => {
  line(1853, y + .5, 1860, y + .5, '#d3d3d3');
  text(1861, y + 5, s, 'price');
});
line(1465.5, 957, 1465.5, 964, '#d3d3d3');
text(1466, 976, '1/8', 'price', '', 'middle');
tagLeft(1855, 260, 60, '93.67', '#ff0000', '#d3d3d3');
tagLeft(1855, 318, 60, '93.48', '#ffff00', '#000');
tagLeft(1855, 404, 60, '93.19', '#8b0000', '#d3d3d3');
rect(1733.5, 914.5, 111, 34, '#000', { stroke: '#fff' });
text(1789, 929, 'Composite Start:', 'tag', '', 'middle');
text(1789, 941, '8/23/2010 (868d)', 'tag', '', 'middle');
skipIcon(1823.5, 64.5);
rect(1892.5, 56.5, 15, 15, '#000', { stroke: '#d3d3d3' });
```
